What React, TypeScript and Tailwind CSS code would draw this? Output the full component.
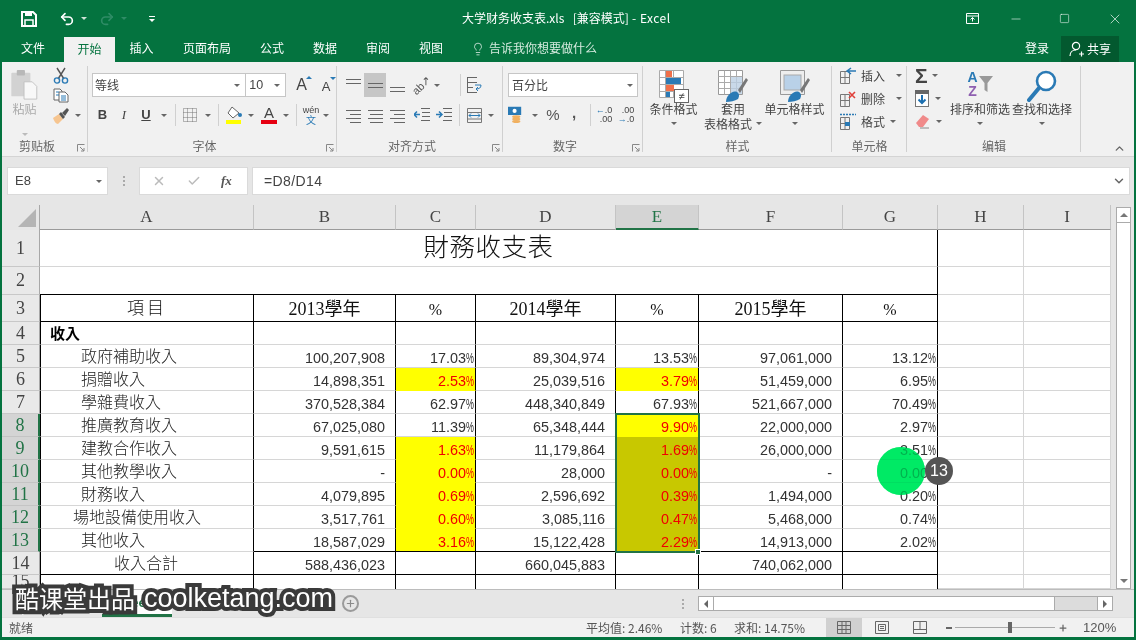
import React from "react";
import { Undo2, Redo2, Lightbulb, Minus, Square, X, ChevronDown, ChevronUp, Plus, Check } from "lucide-react";

const Caret = ({ c = "border-t-[#666]" }: { c?: string }) => (
  <span className={`inline-block w-0 h-0 border-x-[3px] border-x-transparent border-t-[3px] ${c}`} />
);

const Launcher = () => (
  <svg width="8" height="8" viewBox="0 0 8 8" className="absolute right-[3px] bottom-[4px]">
    <path d="M0.5 7.5V0.5H7.5M3 3L7 7M7 4V7H4" fill="none" stroke="#888" strokeWidth="1" />
  </svg>
);

const Group = ({ w, label, children, noLaunch }: { w: string; label: string; children: React.ReactNode; noLaunch?: boolean }) => (
  <div className={`${w} relative flex flex-col h-full shrink-0`}>
    <div className="h-[78px] shrink-0">{children}</div>
    <div className={`text-[12px] text-[#666] text-center leading-[14px] mt-[-1px] ${noLaunch ? "" : "pr-[16px]"}`}>{label}</div>
    {!noLaunch && <Launcher />}
    <div className="absolute right-0 top-[4px] bottom-[4px] w-px bg-[#d0d0d0]" />
  </div>
);

const Slot = ({ w = "w-[22px]", children, cls = "" }: { w?: string; children?: React.ReactNode; cls?: string }) => (
  <div className={`${w} h-full flex items-center justify-center shrink-0 ${cls}`}>{children}</div>
);

const Lines = ({ rows }: { rows: [number, number][] }) => (
  <svg width="15" height="15" viewBox="0 0 15 15">
    {rows.map(([y, off], i) => (
      <path key={i} d={`M${off} ${y + 0.5}H15`} stroke="#666" strokeWidth="1" />
    ))}
  </svg>
);

const VLine = () => <div className="w-px h-[22px] bg-[#d0d0d0] shrink-0" />;

const CutIcon = () => (
  <svg width="16" height="17" viewBox="0 0 16 17">
    <path d="M4 1L11 12M12 1L5 12" stroke="#555" strokeWidth="1.4" fill="none" />
    <circle cx="4" cy="13.5" r="2.6" fill="none" stroke="#2a7ab5" strokeWidth="1.4" />
    <circle cx="12" cy="13.5" r="2.6" fill="none" stroke="#2a7ab5" strokeWidth="1.4" />
  </svg>
);
const CopyIcon = () => (
  <svg width="16" height="15" viewBox="0 0 16 15">
    <path d="M1 1h6l2 2v9H1z" fill="#fff" stroke="#666" />
    <path d="M6 4h6l3 3v7H6z" fill="#fff" stroke="#666" />
    <path d="M3 4h3M3 7h3M8 8h5M8 10h5M8 12h5" stroke="#2a7ab5" />
  </svg>
);
const BrushIcon = () => (
  <svg width="18" height="18" viewBox="0 0 18 18">
    <path d="M1 11l6-4 4 5-5 5c-2 0-4-3-5-6z" fill="#f6c590" />
    <path d="M7 7l4 5 2-2-4-5z" fill="#555" />
    <path d="M10 6l5-5 2 2-4 6z" fill="#555" />
  </svg>
);
const PasteIcon = () => (
  <svg width="29" height="33" viewBox="0 0 29 33">
    <rect x="0" y="3" width="21" height="26" rx="1" fill="#d2d2d2" />
    <rect x="6" y="0" width="9" height="6" rx="1" fill="#b8b8b8" />
    <path d="M14 13h9l5 5v14H14z" fill="#f8f8f8" stroke="#c0c0c0" />
  </svg>
);
const BordersIcon = () => (
  <svg width="14" height="14" viewBox="0 0 14 14">
    <path d="M.5.5h13v13H.5zM4.5.5v13M9.5.5v13M.5 4.5h13M.5 9.5h13" fill="none" stroke="#777" strokeDasharray="1 1" />
  </svg>
);
const FillIcon = () => (
  <svg width="17" height="19" viewBox="0 0 17 19">
    <path d="M6 1L2 7l5 5 6-5z" fill="#fff" stroke="#666" />
    <circle cx="14" cy="9" r="2" fill="#2a7ab5" />
    <rect x="0" y="14" width="15" height="4" fill="#ffff00" />
  </svg>
);
const GridIconBars = () => (
  <svg width="30" height="33" viewBox="0 0 30 33">
    <path d="M.5.5h24v27H.5zM6.5.5v27M14.5.5v27M.5 7.5h24M.5 14.5h24M.5 21.5h24" fill="#fff" stroke="#aaa" />
    <rect x="7" y="1" width="6" height="6" fill="#f0704a" />
    <rect x="7" y="8" width="15" height="6" fill="#2a7ab5" />
    <rect x="7" y="15" width="8" height="6" fill="#f0704a" />
    <rect x="7" y="22" width="4" height="5" fill="#2a7ab5" />
    <rect x="15.5" y="19.5" width="14" height="13" fill="#fff" stroke="#666" />
    <text x="22.5" y="30" fontSize="11" textAnchor="middle" fill="#444" fontFamily="Liberation Sans">≠</text>
  </svg>
);
const TableBrush = ({ fill }: { fill: boolean }) => (
  <svg width="30" height="33" viewBox="0 0 30 33">
    <path d="M.5.5h24v24H.5z" fill={fill ? "#fff" : "#eee"} stroke="#999" />
    {fill ? (
      <>
        <path d="M.5 6.5h24M.5 12.5h24M.5 18.5h24M6.5.5v24M12.5.5v24M18.5.5v24" stroke="#aaa" fill="none" />
        <rect x="13" y="7" width="11" height="17" fill="#bcd0e4" opacity=".8" />
      </>
    ) : (
      <rect x="4" y="5" width="17" height="15" fill="#b9d1e8" stroke="#aaa" />
    )}
    <path d="M20 20L28 8l2 2-8 13z" fill="#777" />
    <path d="M8 32c0-6 6-12 11-10 3 2 2 5 1 7-3 2-8 3-12 3z" fill="#2a7ab5" />
  </svg>
);
const InsertIc = ({ kind }: { kind: "ins" | "del" | "fmt" }) => (
  <svg width="17" height="17" viewBox="0 0 17 17" className="shrink-0">
    <path d="M.5 4.5h9v12h-9zM.5 10.5h9M5 4.5v12" fill="none" stroke="#777" />
    {kind === "fmt" && <rect x="5" y="9" width="5" height="4" fill="#2a7ab5" />}
    {kind === "ins" && <path d="M16 4H8M11 1L7 4l4 3" fill="none" stroke="#2a7ab5" strokeWidth="1.5" />}
    {kind === "del" && <path d="M9 2l6 6M15 2L9 8" stroke="#e0403a" strokeWidth="1.6" />}
    {kind === "fmt" && <path d="M0 1.5h16" stroke="#2a7ab5" strokeDasharray="2 1" strokeWidth="1.5" />}
  </svg>
);
const FillDown = () => (
  <svg width="14" height="17" viewBox="0 0 14 17">
    <rect x=".5" y=".5" width="13" height="16" fill="#fff" stroke="#777" />
    <rect x="0" y="0" width="14" height="4" fill="#666" />
    <path d="M7 5v8M3.5 9.5L7 13l3.5-3.5" stroke="#1c6fb0" strokeWidth="2" fill="none" />
  </svg>
);
const Eraser = () => (
  <svg width="15" height="15" viewBox="0 0 15 15">
    <path d="M1 9l7-8 6 4-6 8H4z" fill="#f08a8a" />
    <path d="M5 14h9" stroke="#888" />
  </svg>
);
const Funnel = () => (
  <svg width="14" height="17" viewBox="0 0 14 17">
    <path d="M0 0h14L8.5 7v9l-3-2V7z" fill="#999" />
  </svg>
);
const Magnifier = () => (
  <svg width="30" height="32" viewBox="0 0 30 32">
    <circle cx="19" cy="11" r="9" fill="#fff" stroke="#2a7ab5" strokeWidth="2.6" />
    <path d="M12 18L2 30" stroke="#2a7ab5" strokeWidth="4" strokeLinecap="round" />
  </svg>
);
const Currency = () => (
  <svg width="17" height="20" viewBox="0 0 17 20">
    <rect x="0" y="0" width="16" height="10" fill="#2a7ab5" />
    <circle cx="8" cy="5" r="2.5" fill="#fff" />
    <ellipse cx="10" cy="12" rx="5" ry="1.8" fill="#f0b060" />
    <ellipse cx="10" cy="15" rx="5" ry="1.8" fill="#f0b060" />
    <ellipse cx="10" cy="18" rx="5" ry="1.8" fill="#f0b060" />
  </svg>
);

const ribbonFont = "font-['Noto_Sans_CJK_SC','Liberation_Sans',sans-serif]";

const Ribbon = () => (
  <div className={`h-[95px] bg-[#f1f1f1] flex ${ribbonFont} text-[#444] border-b border-[#d4d4d4] shrink-0 relative`}>
    <Group w="w-[86px]" label="剪贴板">
      <div className="flex h-full">
        <div className="w-[45px] flex flex-col items-center pt-[8px] text-[#aaa] text-[12px]">
          <PasteIcon />
          <span className="mt-[1px] leading-[16px]">粘贴</span>
          <span className="mt-[5px]"><Caret c="border-t-[#bbb]" /></span>
        </div>
        <div className="flex flex-col items-center w-[22px] pt-[5px] gap-[4px] ml-[3px]">
          <CutIcon />
          <div className="relative"><CopyIcon /></div>
          <BrushIcon />
        </div>
        <div className="pt-[36px] pl-[3px]"><Caret /></div>
      </div>
    </Group>

    <Group w="w-[249px]" label="字体">
      <div className="flex flex-col pt-[11px] pl-[4px]">
        <div className="flex h-[24px] items-stretch">
          <div className="w-[156px] bg-white border border-[#c6c6c6] flex items-center justify-between pl-[2px] pr-[5px] text-[12px]">
            <span>等线</span><Caret />
          </div>
          <div className="w-[40px] bg-white border border-l-0 border-[#c6c6c6] flex items-center justify-between pl-[3px] pr-[5px] text-[12.5px] font-['Liberation_Sans',sans-serif]">
            <span>10</span><Caret />
          </div>
          <Slot w="w-[27px]" cls="ml-[2px]">
            <span className="relative text-[16px] font-['Liberation_Sans',sans-serif]">A<span className="absolute right-[-5px] top-[3px] w-0 h-0 border-x-[3px] border-x-transparent border-b-[3px] border-b-[#2a7ab5]" /></span>
          </Slot>
          <Slot w="w-[22px]">
            <span className="relative text-[13px] mt-[3px] font-['Liberation_Sans',sans-serif]">A<span className="absolute right-[-6px] top-[0px] w-0 h-0 border-x-[3px] border-x-transparent border-t-[3px] border-t-[#2a7ab5]" /></span>
          </Slot>
        </div>
        <div className="flex h-[22px] items-center mt-[7px]">
          <Slot w="w-[21px]"><b className="text-[13px] font-['Liberation_Sans',sans-serif]">B</b></Slot>
          <Slot w="w-[22px]"><i className="text-[13px] font-['Liberation_Serif',serif]">I</i></Slot>
          <Slot w="w-[22px]"><span className="text-[13px] font-bold underline font-['Liberation_Sans',sans-serif]">U</span></Slot>
          <Slot w="w-[14px]"><Caret /></Slot>
          <Slot w="w-[6px]" cls="ml-[1px]"><VLine /></Slot>
          <Slot w="w-[24px]"><BordersIcon /></Slot>
          <Slot w="w-[11px]"><Caret /></Slot>
          <Slot w="w-[10px]"><VLine /></Slot>
          <Slot w="w-[22px]"><FillIcon /></Slot>
          <Slot w="w-[12px]"><Caret /></Slot>
          <Slot w="w-[24px]">
            <span className="flex flex-col items-center">
              <span className="text-[15px] leading-[14px] font-['Liberation_Sans',sans-serif]">A</span>
              <span className="w-[16px] h-[4px] bg-[#e60012]" />
            </span>
          </Slot>
          <Slot w="w-[10px]"><Caret /></Slot>
          <Slot w="w-[10px]"><VLine /></Slot>
          <Slot w="w-[20px]">
            <span className="flex flex-col items-center leading-[10px]">
              <span className="text-[9px] font-['Liberation_Sans',sans-serif]">wén</span>
              <span className="text-[10px] text-[#2a7ab5]">文</span>
            </span>
          </Slot>
          <Slot w="w-[10px]"><Caret /></Slot>
        </div>
      </div>
    </Group>

    <Group w="w-[166px]" label="对齐方式">
      <div className="flex flex-col pt-[11px] pl-[5px]">
        <div className="flex h-[24px]">
          <Slot><Lines rows={[[1, 0], [5, 0]]} /></Slot>
          <Slot cls="bg-[#c6c6c6]"><Lines rows={[[5, 0], [9, 0]]} /></Slot>
          <Slot><Lines rows={[[9, 0], [13, 0]]} /></Slot>
          <Slot cls="ml-[3px]">
            <span className="-rotate-45 text-[11px] text-[#555] font-['Liberation_Sans',sans-serif] leading-none whitespace-nowrap">ab↗</span>
          </Slot>
          <Slot w="w-[8px]"><Caret /></Slot>
          <Slot w="w-[6px]" cls="ml-[16px]"><VLine /></Slot>
          <Slot>
            <svg width="15" height="16" viewBox="0 0 15 16"><path d="M0 .5h10M0 5.5h10M0 10.5h6M0 15.5h10M.5 0v16" stroke="#666" fill="none" /><path d="M8 8h6c0 3-2 4-5 4M11 10l-2 2 2 2" stroke="#2a7ab5" fill="none" /></svg>
          </Slot>
        </div>
        <div className="flex h-[22px] mt-[7px] items-center">
          <Slot><Lines rows={[[2, 0], [6, 4], [10, 0], [14, 4]]} /></Slot>
          <Slot><Lines rows={[[2, 0], [6, 2], [10, 0], [14, 2]]} /></Slot>
          <Slot><Lines rows={[[2, 0], [6, 4], [10, 0], [14, 4]]} /></Slot>
          <Slot cls="ml-[3px]">
            <svg width="16" height="14" viewBox="0 0 16 14"><path d="M7 .5h9M8 4.5h8M8 8.5h8M7 12.5h9" stroke="#666" /><path d="M0 6.5h6M3 3.5l-3 3 3 3" stroke="#2a7ab5" strokeWidth="1.5" fill="none" /></svg>
          </Slot>
          <Slot>
            <svg width="16" height="14" viewBox="0 0 16 14"><path d="M7 .5h9M8 4.5h8M8 8.5h8M7 12.5h9" stroke="#666" /><path d="M0 6.5h6M3 3.5l3 3-3 3" stroke="#2a7ab5" strokeWidth="1.5" fill="none" /></svg>
          </Slot>
          <Slot w="w-[8px]"><VLine /></Slot>
          <Slot>
            <svg width="15" height="15" viewBox="0 0 15 15"><path d="M.5.5h14v14H.5zM.5 4.5h14M.5 11h14" fill="none" stroke="#777" /><path d="M2 7.5h11M4 5.5l-2 2 2 2M11 5.5l2 2-2 2" stroke="#2a7ab5" fill="none" /></svg>
          </Slot>
          <Slot w="w-[12px]"><Caret /></Slot>
        </div>
      </div>
    </Group>

    <Group w="w-[140px]" label="数字">
      <div className="flex flex-col pt-[11px] pl-[5px]">
        <div className="w-[130px] h-[24px] bg-white border border-[#c6c6c6] flex items-center justify-between pl-[3px] pr-[4px] text-[12px]">
          <span>百分比</span><Caret />
        </div>
        <div className="flex h-[22px] mt-[7px] items-center">
          <Slot w="w-[14px]"><Currency /></Slot>
          <Slot w="w-[10px]" cls="ml-[8px]"><Caret /></Slot>
          <Slot w="w-[20px]" cls="ml-[3px] text-[15px] font-['Liberation_Sans',sans-serif] text-[#555]">%</Slot>
          <Slot w="w-[20px]" cls="ml-[1px] text-[15px] font-bold font-['Liberation_Sans',sans-serif] text-[#555]"><span className="-mt-[4px]">,</span></Slot>
          <Slot w="w-[12px]"><VLine /></Slot>
          <Slot w="w-[16px]">
            <span className="flex flex-col text-[9px] leading-[9px] font-['Liberation_Sans',sans-serif] items-end whitespace-nowrap"><span><span className="text-[#2a7ab5]">←</span>.0</span><span>.00</span></span>
          </Slot>
          <Slot cls="ml-[3px]">
            <span className="flex flex-col text-[9px] leading-[9px] font-['Liberation_Sans',sans-serif] items-end whitespace-nowrap"><span>.00</span><span><span className="text-[#2a7ab5]">→</span>.0</span></span>
          </Slot>
        </div>
      </div>
    </Group>

    <Group w="w-[189px]" label="样式" noLaunch>
      <div className="flex h-full pt-[8px] text-[12px] leading-[15px]">
        <div className="w-[59px] flex flex-col items-center ml-[1px]">
          <GridIconBars />
          <span className="-mt-[2px] whitespace-nowrap">条件格式</span>
          <span className="mt-[6px] flex"><Caret /></span>
        </div>
        <div className="w-[60px] flex flex-col items-center">
          <TableBrush fill />
          <span className="-mt-[2px] whitespace-nowrap">套用</span>
          <span className="whitespace-nowrap flex items-center gap-[4px]">表格格式<Caret /></span>
        </div>
        <div className="w-[63px] flex flex-col items-center">
          <TableBrush fill={false} />
          <span className="-mt-[2px] whitespace-nowrap">单元格样式</span>
          <span className="mt-[6px] flex"><Caret /></span>
        </div>
      </div>
    </Group>

    <Group w="w-[75px]" label="单元格" noLaunch>
      <div className="flex flex-col pt-[5px] pl-[8px] text-[12px] gap-[6px]">
        {([["ins", "插入", "ml-[7px]"], ["del", "删除", "ml-[7px]"], ["fmt", "格式", "ml-[1px]"]] as const).map(([k, t, m]) => (
          <div key={k} className="flex items-center h-[17px] gap-[4px] whitespace-nowrap">
            <InsertIc kind={k} /><span>{t}</span><span className={`${m} flex`}><Caret /></span>
          </div>
        ))}
      </div>
    </Group>

    <Group w="w-[174px]" label="编辑" noLaunch>
      <div className="flex h-full">
        <div className="w-[42px] flex flex-col pt-[5px] pl-[8px] gap-[6px]">
          <div className="flex items-center h-[17px] gap-[4px]">
            <span className="text-[21px] font-bold leading-none font-['Liberation_Sans',sans-serif] text-[#444]">Σ</span><Caret />
          </div>
          <div className="flex items-center h-[17px] gap-[6px]"><FillDown /><Caret /></div>
          <div className="flex items-center h-[17px] gap-[6px]"><Eraser /><Caret /></div>
        </div>
        <div className="w-[62px] flex flex-col items-center pt-[8px] text-[12px] leading-[15px]">
          <div className="h-[31px] flex items-start gap-[1px] font-['Liberation_Sans',sans-serif] font-bold">
            <span className="flex flex-col items-center text-[14px] leading-[14px]"><span className="text-[#2a7ab5]">A</span><span className="text-[#8e5fb0]">Z</span></span>
            <span className="mt-[6px]"><Funnel /></span>
          </div>
          <span className="whitespace-nowrap">排序和筛选</span>
          <span className="mt-[6px] flex"><Caret /></span>
        </div>
        <div className="w-[62px] flex flex-col items-center pt-[8px] text-[12px] leading-[15px]">
          <div className="h-[31px]"><Magnifier /></div>
          <span className="whitespace-nowrap">查找和选择</span>
          <span className="mt-[6px] flex"><Caret /></span>
        </div>
      </div>
    </Group>

    <div className="flex-1 flex items-end justify-end pr-[8px] pb-[1px]">
      <ChevronUp size={13} strokeWidth={2.5} className="text-[#666]" />
    </div>
  </div>
);

const colW = ["w-[214px]", "w-[142px]", "w-[80px]", "w-[140px]", "w-[83px]", "w-[144px]", "w-[95px]"];
const colL = ["A", "B", "C", "D", "E", "F", "G"];

const RowData: { n: number; label: string; v: string[]; y: number[] }[] = [
  { n: 5, label: "政府補助收入", v: ["100,207,908", "17.03%", "89,304,974", "13.53%", "97,061,000", "13.12%"], y: [] },
  { n: 6, label: "捐贈收入", v: ["14,898,351", "2.53%", "25,039,516", "3.79%", "51,459,000", "6.95%"], y: [1, 3] },
  { n: 7, label: "學雜費收入", v: ["370,528,384", "62.97%", "448,340,849", "67.93%", "521,667,000", "70.49%"], y: [] },
  { n: 8, label: "推廣教育收入", v: ["67,025,080", "11.39%", "65,348,444", "9.90%", "22,000,000", "2.97%"], y: [3] },
  { n: 9, label: "建教合作收入", v: ["9,591,615", "1.63%", "11,179,864", "1.69%", "26,000,000", "3.51%"], y: [1, 3] },
  { n: 10, label: "其他教學收入", v: ["-", "0.00%", "28,000", "0.00%", "-", "0.00%"], y: [1, 3] },
  { n: 11, label: "財務收入", v: ["4,079,895", "0.69%", "2,596,692", "0.39%", "1,494,000", "0.20%"], y: [1, 3] },
  { n: 12, label: "場地設備使用收入", v: ["3,517,761", "0.60%", "3,085,116", "0.47%", "5,468,000", "0.74%"], y: [1, 3] },
  { n: 13, label: "其他收入", v: ["18,587,029", "3.16%", "15,122,428", "2.29%", "14,913,000", "2.02%"], y: [1, 3] },
];

const cjk = "font-['Noto_Sans_CJK_TC','Liberation_Sans',sans-serif] font-light";
const serif = "font-['Liberation_Serif','Noto_Sans_CJK_TC',serif]";
const num = "font-['Liberation_Sans',sans-serif] text-[14.4px] text-[#333]";

const RowHead = ({ n, h, sel }: { n: number; h: string; sel?: boolean }) => (
  <div className={`${h} w-[38px] shrink-0 flex items-center justify-center ${serif} text-[18px] border-b ${sel ? "bg-[#d4d4d4] text-[#217346] border-r-2 border-r-[#217346] border-b-[#c4c4c4]" : "bg-[#e9e9e9] text-[#444] border-r border-r-[#a8a8a8] border-b-[#c8c8c8]"}`}>
    {n}
  </div>
);

const Tail = ({ h }: { h: string }) => (
  <>
    <div className={`${h} w-[86px] shrink-0 border-r border-b border-[#d6d6d6]`} />
    <div className={`${h} w-[87px] shrink-0 border-r border-b border-[#d6d6d6]`} />
  </>
);

const Pct = ({ v }: { v: string }) => (
  <>
    {v.slice(0, -1)}
    <span className="inline-block w-[8px] text-left origin-left scale-x-[0.62]">%</span>
  </>
);

const DataRow = ({ r }: { r: (typeof RowData)[number] }) => {
  const selRow = r.n >= 8;
  const indent = r.n === 12 ? "pl-[32px]" : "pl-[40px]";
  return (
    <div className="flex h-[23px]">
      <RowHead n={r.n} h="h-[23px]" sel={selRow} />
      <div className={`${colW[0]} ${indent} ${cjk} text-[16px] text-[#222] border-r border-black border-b border-b-[#d6d6d6] border-l border-l-black leading-[21px] whitespace-nowrap`}>{r.label}</div>
      {r.v.map((v, i) => {
        const yellow = r.y.includes(i);
        const olive = i === 3 && r.n >= 9;
        const isPct = i % 2 === 1;
        const bg = olive ? "bg-[#c8c800]" : yellow ? "bg-[#ffff00]" : "";
        const color = yellow || olive ? "text-[#f00000]" : "text-[#333]";
        const last = r.n === 13;
        return (
          <div
            key={i}
            className={`${colW[i + 1]} ${bg} ${color} font-['Liberation_Sans',sans-serif] text-[14.4px] text-right ${isPct ? "pr-[1px]" : "pr-[10px]"} border-r border-r-black border-b ${last ? "border-b-black" : yellow || olive ? "border-b-transparent" : "border-b-[#d6d6d6]"} leading-[26px]`}
          >
            {isPct ? <Pct v={v} /> : v}
          </div>
        );
      })}
      <Tail h="h-[23px]" />
    </div>
  );
};

const Sheet = () => (
  <div className="flex-1 relative overflow-hidden">
    <div className="flex h-[25px] bg-[#e6e6e6]">
      <div className="w-[38px] h-full border-r border-[#a8a8a8] relative">
        <svg width="18" height="18" viewBox="0 0 18 18" className="absolute right-[3px] bottom-[3px]"><path d="M18 0V18H0z" fill="#b4b4b4" /></svg>
      </div>
      {colL.map((c, i) => (
        <div key={c} className={`${colW[i]} ${c === "E" ? "bg-[#d4d4d4] text-[#217346] border-b-2 border-b-[#217346]" : "text-[#444] border-b border-b-[#9a9a9a]"} flex items-center justify-center ${serif} text-[17px] border-r border-r-[#c4c4c4]`}>{c}</div>
      ))}
      {["H", "I"].map((c) => (
        <div key={c} className={`${c === "H" ? "w-[86px]" : "w-[87px]"} text-[#444] border-b border-b-[#9a9a9a] flex items-center justify-center ${serif} text-[17px] border-r border-r-[#c4c4c4]`}>{c}</div>
      ))}
    </div>
    <div className="bg-white">
      <div className="flex h-[37px]">
        <RowHead n={1} h="h-[37px]" />
        <div className={`w-[898px] ${cjk} border-r border-r-black border-b border-b-[#d6d6d6] text-[25.5px] text-[#111] text-center leading-[30px] tracking-[0.5px]`}>財務收支表</div>
        <Tail h="h-[37px]" />
      </div>
      <div className="flex h-[28px]">
        <RowHead n={2} h="h-[28px]" />
        <div className="w-[898px] border-r border-r-black border-b border-b-black" />
        <Tail h="h-[28px]" />
      </div>
      <div className="flex h-[27px]">
        <RowHead n={3} h="h-[27px]" />
        {["項目", "2013學年", "%", "2014學年", "%", "2015學年", "%"].map((t, i) => (
          <div key={i} className={`${colW[i]} ${i === 0 ? "border-l border-l-black leading-[24px]" : "leading-[29px]"} ${serif} ${t === "%" ? "text-[16px]" : "text-[18px]"} text-[#111] text-center border-r border-r-black border-b border-b-black`}>
            {i === 0 ? <span className={`${cjk} text-[17px] tracking-[3px]`}>{t}</span> : t}
          </div>
        ))}
        <Tail h="h-[27px]" />
      </div>
      <div className="flex h-[23px]">
        <RowHead n={4} h="h-[23px]" />
        <div className={`${colW[0]} pl-[9px] font-['Noto_Sans_CJK_TC',sans-serif] font-bold text-[15px] text-black border-l border-l-black border-r border-r-black border-b border-b-[#d6d6d6] leading-[22px]`}>收入</div>
        {colW.slice(1).map((w, i) => (
          <div key={i} className={`${w} border-r border-r-black border-b border-b-[#d6d6d6]`} />
        ))}
        <Tail h="h-[23px]" />
      </div>
      {RowData.map((r) => <DataRow key={r.n} r={r} />)}
      <div className="flex h-[23px]">
        <RowHead n={14} h="h-[23px]" />
        <div className={`${colW[0]} pl-[73px] ${cjk} text-[16px] text-[#222] border-l border-l-black border-r border-r-black border-b border-b-black leading-[20px]`}>收入合計</div>
        {["588,436,023", "", "660,045,883", "", "740,062,000", ""].map((v, i) => (
          <div key={i} className={`${colW[i + 1]} ${num} text-right pr-[10px] border-r border-r-black border-b border-b-black leading-[26px]`}>{v}</div>
        ))}
        <Tail h="h-[23px]" />
      </div>
      <div className="flex h-[14px] overflow-hidden">
        <RowHead n={15} h="h-[14px]" />
        {colW.map((w, i) => (
          <div key={i} className={`${w} ${i === 0 ? "border-l border-l-black" : ""} border-r border-r-black`} />
        ))}
        <Tail h="h-[14px]" />
      </div>
    </div>
    {/* selection rectangle */}
    <div className="absolute left-[613px] top-[208px] w-[85px] h-[140px] border-2 border-[#217346] pointer-events-none" />
    <div className="absolute left-[693px] top-[344px] w-[6px] h-[6px] bg-[#217346] border border-white pointer-events-none" />
  </div>
);

const VScroll = () => (
  <div className="w-[23px] bg-[#e6e6e6] shrink-0 pl-[5px] pr-[3px] pt-[2px] flex">
    <div className="flex-1 bg-white border border-[#ababab] flex flex-col justify-between">
      <div className="h-[15px] border-b border-[#ababab] flex items-center justify-center">
        <span className="w-0 h-0 border-x-[4px] border-x-transparent border-b-[4px] border-b-[#777]" />
      </div>
      <div className="h-[15px] flex items-center justify-center">
        <span className="w-0 h-0 border-x-[4px] border-x-transparent border-t-[4px] border-t-[#777]" />
      </div>
    </div>
  </div>
);

const SheetTabs = () => (
  <div className={`h-[28px] bg-[#e6e6e6] flex items-center border-t border-[#bcbcbc] shrink-0 relative ${ribbonFont}`}>
    <div className="ml-[100px] w-[70px] h-full bg-white border-b-[3px] border-[#217346] text-[#217346] text-[12px] font-bold flex items-center justify-center">Sheet1</div>
    <div className="w-[56px] text-center text-[12px] text-[#444]">Sheet2</div>
    <div className="w-[56px] text-center text-[12px] text-[#444]">Sheet3</div>
    <div className="ml-[58px] w-[17px] h-[17px] rounded-full border-2 border-[#9a9a9a] flex items-center justify-center">
      <Plus size={11} strokeWidth={2.5} className="text-[#8a8a8a]" />
    </div>
    <div className="ml-[323px] flex flex-col gap-[2px]">
      <span className="w-[2px] h-[2px] bg-[#aaa]" /><span className="w-[2px] h-[2px] bg-[#aaa]" /><span className="w-[2px] h-[2px] bg-[#aaa]" />
    </div>
    <div className="ml-[14px] w-[415px] h-[15px] flex border border-[#ababab] bg-white">
      <div className="w-[15px] border-r border-[#ababab] flex items-center justify-center">
        <span className="w-0 h-0 border-y-[4px] border-y-transparent border-r-[4px] border-r-[#666]" />
      </div>
      <div className="flex-1 bg-white" />
      <div className="w-[43px] bg-[#dcdcdc] border-l border-[#ababab]" />
      <div className="w-[15px] border-l border-[#ababab] flex items-center justify-center">
        <span className="w-0 h-0 border-y-[4px] border-y-transparent border-l-[4px] border-l-[#666]" />
      </div>
    </div>
  </div>
);

const StatusBar = () => (
  <div className={`h-[20px] bg-[#f1f1f1] flex items-center text-[12px] text-[#555] shrink-0 ${ribbonFont} border-t border-[#e0e0e0]`}>
    <span className="ml-[7px] w-[577px]">就绪</span>
    <span className="w-[94px] whitespace-nowrap">平均值: 2.46%</span>
    <span className="w-[54px] whitespace-nowrap">计数: 6</span>
    <span className="w-[92px] whitespace-nowrap">求和: 14.75%</span>
    <div className="w-[36px] h-full bg-[#d0d0d0] flex items-center justify-center">
      <svg width="14" height="13" viewBox="0 0 14 13"><path d="M.5.5h13v12H.5zM.5 4.5h13M.5 8.5h13M5 .5v12M9 .5v12" fill="none" stroke="#666" /></svg>
    </div>
    <div className="w-[40px] flex items-center justify-center">
      <svg width="14" height="13" viewBox="0 0 14 13"><path d="M.5.5h13v12H.5zM3.5 3.5h7v6h-7zM5 5.5h4M5 7.5h4" fill="none" stroke="#666" /></svg>
    </div>
    <div className="w-[36px] flex items-center justify-center">
      <svg width="14" height="13" viewBox="0 0 14 13"><path d="M.5.5h13v12H.5zM.5 8.5h13M7 .5v8" fill="none" stroke="#666" /></svg>
    </div>
    <div className="ml-[8px] flex items-center w-[123px]">
      <span className="w-[6px] h-[2px] bg-[#666]" />
      <div className="relative ml-[3px] w-[100px] h-px bg-[#aaa]">
        <span className="absolute left-[53px] top-[-5px] w-[4px] h-[11px] bg-[#666]" />
      </div>
      <Plus size={10} strokeWidth={3} className="ml-[3px] text-[#666]" />
    </div>
    <span className="ml-[14px] font-['Liberation_Sans',sans-serif] text-[13px]">120%</span>
  </div>
);

export default function App() {
  return (
    <div className="w-[1136px] h-[640px] relative overflow-hidden flex flex-col bg-[#e6e6e6] border-x-2 border-b-[3px] border-[#04733f]">
      <div className={`h-[37px] bg-[#04733f] flex items-center text-white relative shrink-0 ${ribbonFont}`}>
        <svg width="16" height="16" viewBox="0 0 16 16" className="ml-[19px]">
          <path d="M1 1h11l3 3v11H1z" fill="none" stroke="#fff" strokeWidth="2" />
          <rect x="4" y="1" width="7" height="4" fill="#fff" />
          <rect x="4" y="9" width="8" height="6" fill="none" stroke="#fff" strokeWidth="1.5" />
        </svg>
        <Undo2 size={16} strokeWidth={2.5} className="ml-[22px]" />
        <span className="ml-[6px] flex"><Caret c="border-t-[#cfe3d8]" /></span>
        <Redo2 size={16} strokeWidth={2.5} className="ml-[12px] text-[#2f8c66]" />
        <span className="ml-[6px] flex"><Caret c="border-t-[#2f8c66]" /></span>
        <span className="ml-[22px] flex flex-col items-center gap-[2px]">
          <span className="w-[6px] h-px bg-white" /><Caret c="border-t-white" />
        </span>
        <div className="absolute left-[460px] top-[10px] text-[12px] leading-[16px] whitespace-pre text-white">大学财务收支表.xls  <span className="ml-[3px]">[兼容模式]</span><span className="tracking-[0.5px]"> - Excel</span></div>
        <div className="ml-auto flex items-center">
          <svg width="13" height="11" viewBox="0 0 13 11" className="mr-[30px]"><path d="M.5.5h12v10H.5zM.5 3h12M6.5 8.5V4.5M4.5 6.5l2-2 2 2" fill="none" stroke="#fff" /></svg>
          <Minus size={14} strokeWidth={1} className="mr-[36px]" />
          <Square size={11} strokeWidth={1.2} className="mr-[37px]" />
          <X size={16} strokeWidth={1} className="mr-[11px]" />
        </div>
      </div>
      <div className={`h-[25px] bg-[#04733f] flex items-stretch text-white text-[12px] relative shrink-0 ${ribbonFont}`}>
        <span className="w-[62px] text-center leading-[22px]">文件</span>
        <span className="w-[51px] bg-[#f1f1f1] text-[#04733f] text-center leading-[24px]">开始</span>
        <span className="w-[53px] text-center leading-[22px]">插入</span>
        <span className="w-[78px] text-center leading-[22px]">页面布局</span>
        <span className="w-[52px] text-center leading-[22px]">公式</span>
        <span className="w-[54px] text-center leading-[22px]">数据</span>
        <span className="w-[52px] text-center leading-[22px]">审阅</span>
        <span className="w-[54px] text-center leading-[22px]">视图</span>
        <Lightbulb size={14} strokeWidth={1.2} className="ml-[13px] mt-[5px]" />
        <span className="ml-[4px] leading-[22px] text-[#d6ebdf]">告诉我你想要做什么</span>
        <span className="ml-auto leading-[22px] mr-[12px]">登录</span>
        <div className="w-[58px] h-[26px] -mt-[1px] mr-[15px] bg-[#03592f] flex items-center justify-center gap-[2px]">
          <svg width="16" height="16" viewBox="0 0 16 16" fill="none" stroke="#fff" strokeWidth="1.2"><circle cx="7" cy="5" r="3.6" /><path d="M1 15c0-4 3-6 6-6M10 13h5M12.5 10.5v5" /></svg>
          <span>共享</span>
        </div>
      </div>
      <Ribbon />
      <div className="h-[38px] shrink-0 flex items-start pt-[10px] bg-[#e6e6e6] pr-[4px] pl-[5px]">
        <div className="w-[101px] h-[28px] bg-white border border-[#dadada] flex items-center justify-between pl-[7px] pr-[5px] font-['Liberation_Sans',sans-serif] text-[13px] text-[#444]">
          <span>E8</span><Caret />
        </div>
        <div className="w-[31px] h-[28px] flex flex-col items-center justify-center gap-[2px]">
          <span className="w-[2px] h-[2px] bg-[#aaa]" /><span className="w-[2px] h-[2px] bg-[#aaa]" /><span className="w-[2px] h-[2px] bg-[#aaa]" />
        </div>
        <div className="w-[109px] h-[28px] bg-white border border-[#dadada] flex items-center text-[#bbb]">
          <X size={14} strokeWidth={2.5} className="ml-[12px]" />
          <Check size={14} strokeWidth={2.5} className="ml-[21px]" />
          <i className="ml-[20px] text-[#555] text-[13px] font-['Liberation_Serif',serif] font-bold">fx</i>
        </div>
        <div className="flex-1 ml-[4px] h-[28px] bg-white border border-[#dadada] flex items-center justify-between pl-[11px] pr-[3px] font-['Liberation_Sans',sans-serif] text-[14px] text-[#444] tracking-[0.4px]">
          <span>=D8/D14</span>
          <ChevronDown size={14} strokeWidth={2.5} className="text-[#666]" />
        </div>
      </div>
      <div className="flex-1 flex min-h-0 pt-[10px] bg-[#e6e6e6] overflow-hidden">
        <Sheet />
        <VScroll />
      </div>
      <SheetTabs />
      <StatusBar />

      {/* overlays */}
      <div className="absolute left-[875px] top-[447px] w-[48px] h-[48px] rounded-full bg-[#00ea66] mix-blend-multiply" />
      <div className="absolute left-[875px] top-[447px] w-[48px] h-[48px] rounded-full bg-[#00ea66]/70" />
      <div className="absolute left-[923px] top-[457px] w-[28px] h-[28px] rounded-full bg-[#555] text-white text-[16px] flex items-center justify-center font-['Liberation_Sans',sans-serif]">13</div>
      <div className="absolute left-[13px] top-[581px] flex gap-[9px] items-center text-white whitespace-nowrap [-webkit-text-stroke:8px_#3a3a3a] [paint-order:stroke_fill] font-['Noto_Sans_CJK_SC','Liberation_Sans',sans-serif] text-[24px] leading-[34px]">
        <span>酷课堂出品</span>
        <span className="text-[27px] font-['Liberation_Sans',sans-serif]">coolketang.com</span>
      </div>
    </div>
  );
}
